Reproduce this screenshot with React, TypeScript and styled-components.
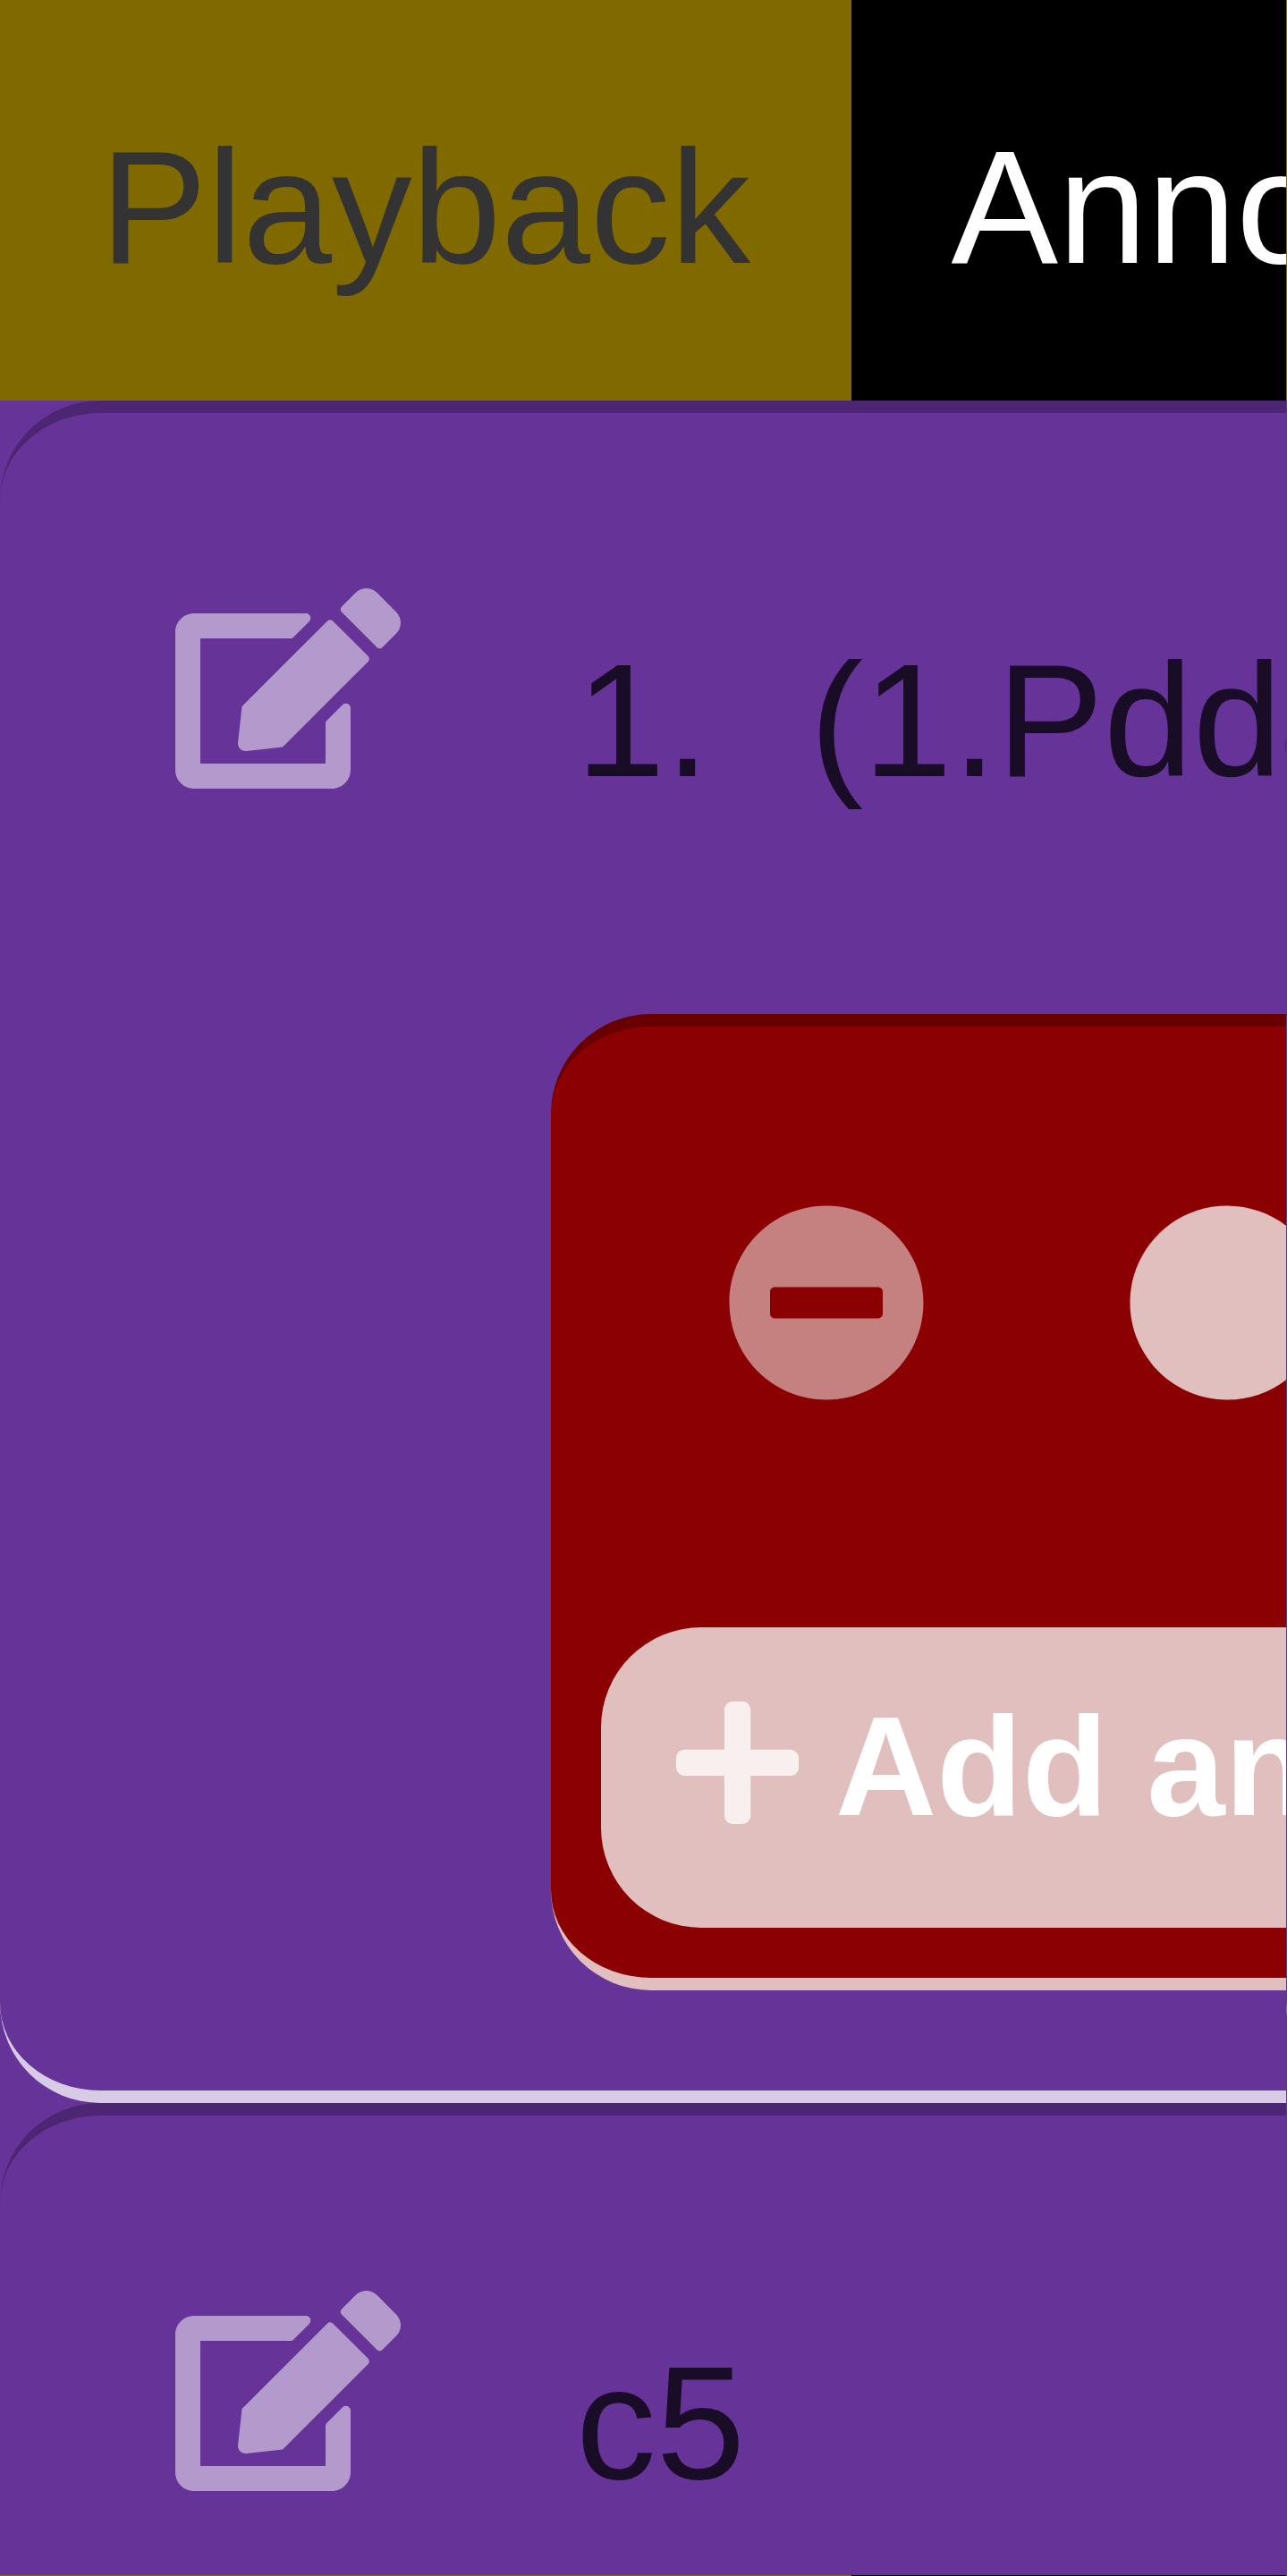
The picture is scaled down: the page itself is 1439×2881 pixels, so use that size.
import React from "react";
import styled, { createGlobalStyle, css } from "styled-components";
import { FaCircle, FaEdit, FaMinusCircle, FaPlus } from "react-icons/fa";

const GlobalStyle = createGlobalStyle`
  html, body { margin: 0; overflow: hidden; }
  body { background: #663399; font-family: "Liberation Sans", Arial, sans-serif; font-size: 179.2px; }
  * { box-sizing: border-box; }
`;

const bevel = css`
  border: 0 solid;
  border-top: 14px solid rgba(0, 0, 0, 0.25);
  border-bottom: 14px solid rgba(255, 255, 255, 0.75);
  border-radius: 112px;
`;

const Frame = styled.div`
  display: grid;
  grid-template: 2880px 1px / 1438px 1px;
  width: 1439px;
  height: 2881px;
  overflow: hidden;
`;

const Panel = styled.main`
  overflow: hidden;
  min-width: 0;
`;

const Tabs = styled.nav`
  display: flex;
  height: 448px;
`;

const Tab = styled.div<{ $active?: boolean }>`
  flex: none;
  padding: 129px 112px 0;
  width: ${(p) => (p.$active ? "1400px" : "951.5px")};
  line-height: 206px;
  white-space: nowrap;
  background: ${(p) => (p.$active ? "#000" : "#806a00")};
  color: ${(p) => (p.$active ? "#fff" : "#333")};
`;

const Card = styled.section`
  ${bevel}
  display: flex;
  width: 2400px;
  height: 1904px;
  padding-left: 196px;
`;

const EditIcon = styled(FaEdit)`
  flex: none;
  width: 252px;
  height: 224px;
  margin-top: 196px;
  color: rgba(255, 255, 255, 0.5);
`;

const Body = styled.div`
  flex: 1;
  padding: 241px 0 0 168px;
`;

const Move = styled.div`
  display: flex;
  height: 431px;
  padding-left: 28px;
  line-height: 206px;
  color: rgba(0, 0, 0, 0.75);
  white-space: nowrap;
`;

const Line = styled.span`
  margin-left: 112px;
`;

const Annotations = styled.div`
  ${bevel}
  height: 1092px;
  padding: 196.5px 56px 42px;
  background: #8b0000;
`;

const Glyphs = styled.div`
  display: flex;
  gap: 224px;
  height: 475.5px;
  padding-left: 140px;
`;

const RemoveIcon = styled(FaMinusCircle)`
  width: 224px;
  height: 224px;
  color: rgba(255, 255, 255, 0.5);
`;

const ColorIcon = styled(FaCircle)`
  width: 224px;
  height: 224px;
  color: rgba(255, 255, 255, 0.75);
`;

const AddButton = styled.div`
  display: flex;
  height: 336px;
  padding: 66px 84px 0;
  border-radius: 112px;
  background: rgba(255, 255, 255, 0.75);
  color: #fff;
  font-size: 156.8px;
  font-weight: bold;
  line-height: 180px;
  white-space: nowrap;
`;

const PlusIcon = styled(FaPlus)`
  flex: none;
  width: 137.2px;
  height: 156.8px;
  margin: 7px 40.8px 0 0;
  color: rgba(255, 255, 255, 0.75);
`;

const EdgeColumn = styled.div`
  background: linear-gradient(
    #806a00 448px,
    #663399 448px 2240px,
    #9270b5 2246px 2250px,
    #663399 2254px
  );
`;

const EdgeRow = styled.div`
  background: linear-gradient(90deg, #806a00 952px, #000 952px);
`;

const EdgeCorner = styled.div`
  background: #806a00;
`;

export default function App() {
  return (
    <>
      <GlobalStyle />
      <Frame>
        <Panel>
          <Tabs>
            <Tab>Playback</Tab>
            <Tab $active>Annotations</Tab>
          </Tabs>
          <Card>
            <EditIcon />
            <Body>
              <Move>
                <span>1.</span>
                <Line>(1.Pdd4)</Line>
              </Move>
              <Annotations>
                <Glyphs>
                  <RemoveIcon />
                  <ColorIcon />
                </Glyphs>
                <AddButton>
                  <PlusIcon />
                  Add annotation
                </AddButton>
              </Annotations>
            </Body>
          </Card>
          <Card>
            <EditIcon />
            <Body>
              <Move>c5</Move>
            </Body>
          </Card>
        </Panel>
        <EdgeColumn />
        <EdgeRow />
        <EdgeCorner />
      </Frame>
    </>
  );
}
